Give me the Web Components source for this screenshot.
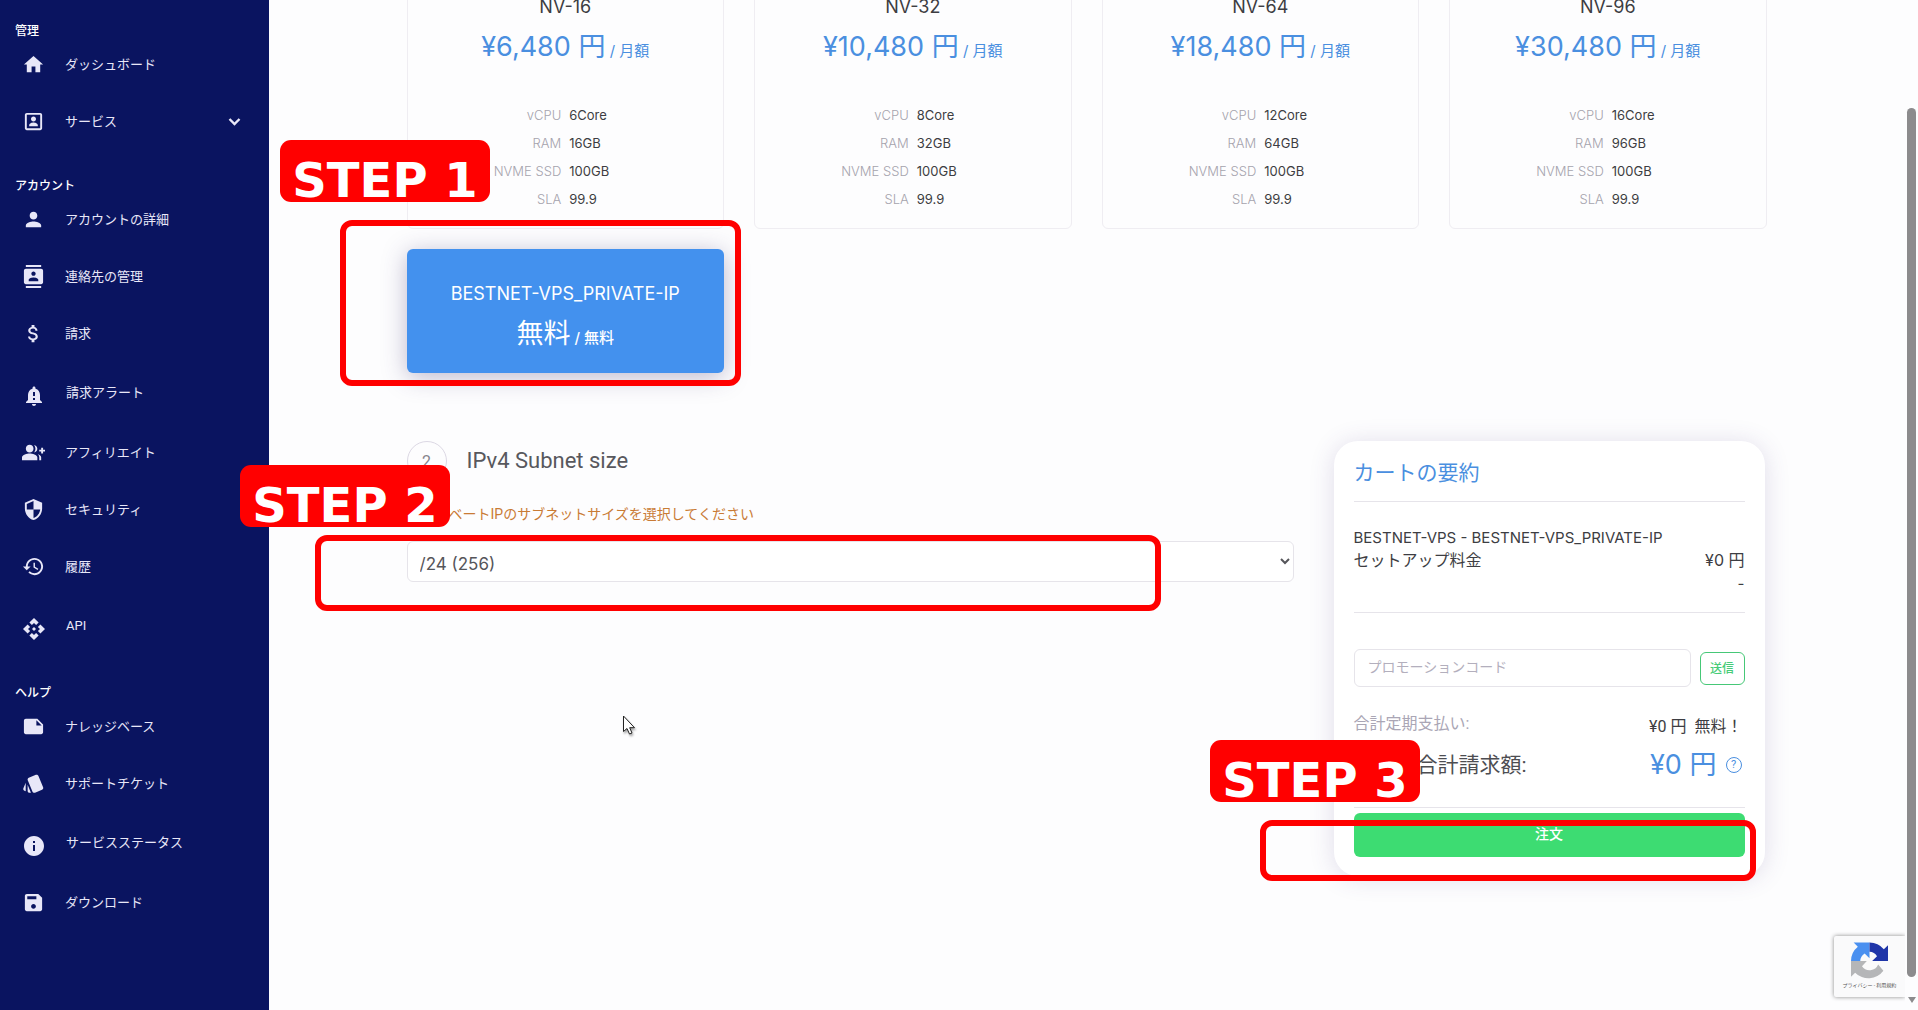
<!DOCTYPE html>
<html lang="ja">
<head>
<meta charset="utf-8">
<title>BESTNET VPS</title>
<style>
html, body { margin: 0; height: 100%; }
body {
  --ui: Roboto, "Noto Sans CJK JP", sans-serif;
  --geo: Inter, "Noto Sans CJK JP", sans-serif;
  --blue: #4a8fe0;
  --ink: #3d3d42;
  --line: #e6e4ea;
  font-family: var(--ui);
  color: var(--ink);
  background: #fdfdfe;
  overflow: hidden;
}
</style>
</head>
<body>
<order-page></order-page>

<script>
const ICONS = {
  home: 'M10 20v-6h4v6h5v-8h3L12 3 2 12h3v8z',
  service: 'M19 5v14H5V5h14m0-2H5c-1.11 0-2 .9-2 2v14c0 1.1.89 2 2 2h14c1.1 0 2-.9 2-2V5c0-1.1-.89-2-2-2zm-7 9c-1.5 0-2.6-1.1-2.6-2.6S10.500 6.800 12 6.800s2.600 1.100 2.600 2.600S13.500 12 12 12zm4.500 5h-9v-1.200c0-1.800 3-2.700 4.500-2.700s4.500.9 4.500 2.700V17z',
  person: 'M12 12c2.210 0 4-1.790 4-4s-1.790-4-4-4-4 1.790-4 4 1.790 4 4 4zm0 2c-2.670 0-8 1.340-8 4v2h16v-2c0-2.660-5.330-4-8-4z',
  contacts: 'M20 0H4v2h16V0zM4 24h16v-2H4v2zM20 4H4c-1.100 0-2 .9-2 2v12c0 1.100.9 2 2 2h16c1.100 0 2-.9 2-2V6c0-1.100-.9-2-2-2zm-8 2.750c1.240 0 2.250 1.010 2.250 2.250s-1.010 2.250-2.250 2.250S9.750 10.240 9.750 9 10.760 6.750 12 6.750zM17 17H7v-1.500c0-1.670 3.330-2.500 5-2.500s5 .83 5 2.500V17z',
  money: 'M11.800 10.900c-2.270-.59-3-1.200-3-2.150 0-1.090 1.010-1.850 2.700-1.850 1.780 0 2.440.85 2.500 2.100h2.210c-.07-1.720-1.120-3.300-3.210-3.810V3h-3v2.160c-1.940.42-3.500 1.680-3.500 3.610 0 2.310 1.910 3.460 4.700 4.130 2.500.6 3 1.480 3 2.410 0 .69-.49 1.790-2.700 1.790-2.060 0-2.870-.92-2.980-2.100h-2.200c.12 2.190 1.760 3.420 3.680 3.830V21h3v-2.150c1.950-.37 3.500-1.500 3.500-3.550 0-2.840-2.430-3.810-4.700-4.400z',
  alert: 'M18 16v-5c0-3.070-1.640-5.640-4.500-6.320V4c0-.83-.67-1.500-1.500-1.500s-1.500.67-1.500 1.500v.68C7.630 5.360 6 7.920 6 11v5l-2 2v1h16v-1l-2-2zm-5 0h-2v-2h2v2zm0-4h-2V8h2v4zm-1 10c1.100 0 2-.9 2-2h-4c0 1.100.89 2 2 2z',
  group: 'M22 9V7h-2v2h-2v2h2v2h2v-2h2V9zM8 12c2.210 0 4-1.790 4-4s-1.790-4-4-4-4 1.790-4 4 1.790 4 4 4zM8 13c-2.670 0-8 1.340-8 4v3h16v-3c0-2.660-5.330-4-8-4zM12.510 4.050C13.430 5.110 14 6.490 14 8s-.57 2.890-1.490 3.950C14.470 11.700 16 10.040 16 8s-1.530-3.700-3.490-3.950zM16.530 13.830C17.420 14.660 18 15.700 18 17v3h2v-3c0-1.450-1.590-2.510-3.470-3.170z',
  shield: 'M12 1L3 5v6c0 5.550 3.840 10.740 9 12 5.160-1.260 9-6.450 9-12V5l-9-4zm0 10.990h7c-.53 4.120-3.280 7.790-7 8.940V12H5V6.300l7-3.110v8.800z',
  history: 'M13 3c-4.970 0-9 4.030-9 9H1l3.890 3.890.07.14L9 12H6c0-3.870 3.130-7 7-7s7 3.130 7 7-3.130 7-7 7c-1.930 0-3.680-.79-4.940-2.060l-1.420 1.420C8.270 19.990 10.510 21 13 21c4.970 0 9-4.030 9-9s-4.030-9-9-9zm-1 5v5l4.280 2.540.72-1.210-3.500-2.080V8H12z',
  api: 'M14 12l-2 2-2-2 2-2 2 2zm-2-6l2.120 2.120 2.500-2.500L12 1 7.380 5.620l2.500 2.500L12 6zm-6 6l2.120-2.120-2.500-2.500L1 12l4.620 4.620 2.500-2.500L6 12zm12 0l-2.120 2.120 2.500 2.500L23 12l-4.620-4.620-2.500 2.500L18 12zm-6 6l-2.120-2.120-2.500 2.500L12 23l4.620-4.620-2.500-2.500L12 18z',
  note: 'M22 10l-6-6H4c-1.100 0-2 .9-2 2v12.010c0 1.100.9 1.990 2 1.990l16-.01c1.100 0 2-.89 2-1.990v-8zm-7-4.500l5.500 5.500H15V5.500z',
  style: 'M2.530 19.650l1.340.56v-9.030l-2.430 5.860c-.41 1.020.08 2.190 1.090 2.610zM22.030 15.950L17.070 3.980c-.31-.75-1.040-1.210-1.810-1.230-.26 0-.53.04-.79.15L7.100 5.950c-.75.31-1.210 1.030-1.230 1.800-.01.27.04.54.15.8l4.960 11.970c.31.76 1.050 1.220 1.830 1.230.26 0 .52-.05.77-.15l7.360-3.050c1.020-.42 1.510-1.590 1.090-2.600zM5.880 19.750c0 1.100.9 2 2 2h1.450l-3.450-8.340v6.340z',
  info: 'M12 2C6.480 2 2 6.480 2 12s4.480 10 10 10 10-4.480 10-10S17.520 2 12 2zm1 15h-2v-6h2v6zm0-8h-2V7h2v2z',
  save: 'M17 3H5c-1.110 0-2 .9-2 2v14c0 1.100.89 2 2 2h14c1.100 0 2-.9 2-2V7l-4-4zm-5 15.500c-1.500 0-2.500-1.100-2.500-2.500s1.100-2.500 2.500-2.500 2.500 1.100 2.500 2.500-1.100 2.500-2.500 2.500zm3-10H5.500V5.500H15v3z'
};

class View extends HTMLElement {
  connectedCallback() {
    if (this.shadowRoot) return;
    this.attachShadow({ mode: 'open' }).innerHTML = this.view();
  }
  at(name) { return this.getAttribute(name) || ''; }
}

customElements.define('nav-item', class extends View {
  view() {
    return `<style>
      :host { display: block; }
      a { display: flex; align-items: center; height: 57px; padding: 0 28px 0 22px; box-sizing: border-box;
          color: #e8e7f8; text-decoration: none; font-size: 13px; line-height: 20px; }
      .icon { width: 23px; height: 23px; fill: currentColor; margin-right: 20px; flex: none; }
      :host([tall]) a { height: 62px; }
      :host([tall]) .icon { width: 24px; height: 24px; margin-top: 5px; }
      span { flex: 1; }
      .chev { width: 13px; height: 8px; fill: none; stroke: currentColor; stroke-width: 2.4; }
    </style>
    <a href="#"><svg class="icon" viewBox="0 0 24 24" aria-hidden="true"><path fill-rule="evenodd" d="${ICONS[this.at('icon')]}"/></svg>
      <span><slot></slot></span>
      ${this.hasAttribute('more') ? '<svg class="chev" viewBox="0 0 13 8"><path d="M1.500 1l5 5 5-5"/></svg>' : ''}</a>`;
  }
});

customElements.define('nav-group', class extends View {
  view() {
    return `<style>
      :host { display: block; }
      h2 { margin: 0; padding: 31px 15px 0; line-height: 10px; font-size: 12px; font-weight: 500; color: #fff; }
      :host([first]) h2 { padding-top: 26px; }
    </style><h2>${this.at('label')}</h2><slot></slot>`;
  }
});

customElements.define('side-nav', class extends View {
  view() {
    return `<style>
      :host { display: block; width: 269px; flex: none; background: #0a1460; }
    </style>
    <nav>
      <nav-group first label="管理">
        <nav-item icon="home">ダッシュボード</nav-item>
        <nav-item icon="service" more>サービス</nav-item>
      </nav-group>
      <nav-group label="アカウント">
        <nav-item icon="person">アカウントの詳細</nav-item>
        <nav-item icon="contacts">連絡先の管理</nav-item>
        <nav-item icon="money">請求</nav-item>
        <nav-item icon="alert" tall>請求アラート</nav-item>
        <nav-item icon="group">アフィリエイト</nav-item>
        <nav-item icon="shield">セキュリティ</nav-item>
        <nav-item icon="history">履歴</nav-item>
        <nav-item icon="api" tall>API</nav-item>
      </nav-group>
      <nav-group label="ヘルプ">
        <nav-item icon="note">ナレッジベース</nav-item>
        <nav-item icon="style">サポートチケット</nav-item>
        <nav-item icon="info" tall>サービスステータス</nav-item>
        <nav-item icon="save">ダウンロード</nav-item>
      </nav-group>
    </nav>`;
  }
});

customElements.define('plan-card', class extends View {
  view() {
    const rows = [['vCPU', this.at('cpu')], ['RAM', this.at('ram')], ['NVME SSD', '100GB'], ['SLA', '99.9']];
    return `<style>
      :host { display: block; box-sizing: border-box; border: 1px solid #efedf2; border-radius: 6px;
              padding: 26px 16px 15px; text-align: center; font-family: var(--geo); }
      h3 { margin: 0 0 10px; font-size: 18px; line-height: 20px; font-weight: 400; }
      p { margin: 0; height: 40px; font-size: 27px; line-height: 40px; color: var(--blue); font-weight: 400; white-space: nowrap; }
      small { font-size: 15px; }
      dl { margin: 34px 0 0; display: grid; grid-template-columns: 1fr 1fr; column-gap: 8px; font-size: 13px; line-height: 28px; }
      dt { text-align: right; color: #a5a3ad; font-weight: 300; }
      dd { margin: 0; text-align: left; }
      :host([selected]) { border: 0; background: #4391ee; color: #fff; padding: 33px 16px 19px;
              box-shadow: 0 4px 24px rgba(60, 50, 110, .34); }
      :host([selected]) h3 { line-height: 24px; margin-bottom: 8px; }
      :host([selected]) p { color: #fff; }
      :host([selected]) small { font-weight: 500; }
    </style>
    <h3>${this.at('name')}</h3>
    <p>${this.at('price')}<small> / ${this.at('term')}</small></p>
    ${this.hasAttribute('selected') ? '' : `<dl>${rows.map(r => `<dt>${r[0]}</dt><dd>${r[1]}</dd>`).join('')}</dl>`}`;
  }
});

customElements.define('subnet-field', class extends View {
  view() {
    return `<style>
      :host { display: block; }
      header { display: flex; align-items: center; gap: 20px; }
      .num { width: 40px; height: 40px; box-sizing: border-box; border: 1px solid #dcd8e4; border-radius: 50%;
             display: grid; place-items: center; font-size: 16px; color: #85838c; }
      h2 { margin: 0; font-size: 22px; line-height: 40px; font-weight: 400; color: #58585d; }
      label { display: block; margin: 23px 0 17px; font-size: 14px; line-height: 20px; color: #c97b35; }
      select { display: block; width: 100%; height: 41px; box-sizing: border-box; padding: 4px 0 0 8px; border: 1px solid var(--line);
               border-radius: 6px; background: #fff; color: #55555a; font: 17px var(--geo); }
    </style>
    <header><span class="num">2</span><h2>IPv4 Subnet size</h2></header>
    <label for="size">プライベートIPのサブネットサイズを選択してください</label>
    <select id="size"><option>/24 (256)</option></select>`;
  }
});

customElements.define('cart-summary', class extends View {
  view() {
    return `<style>
      :host { display: block; box-sizing: border-box; padding: 17px 20px 19px; background: #fff; border-radius: 24px;
              box-shadow: 0 2px 24px rgba(80, 60, 130, .17); font-size: 16px; }
      h2 { margin: 0; font-size: 21px; line-height: 30px; font-weight: 400; color: var(--blue); }
      hr { border: 0; border-top: 1px solid var(--line); margin: 13px 0 0; }
      .lines + hr { margin-top: 17px; }
      .total + hr { margin-top: 22px; }
      .lines { padding-top: 24px; line-height: 23px; font-family: var(--geo); font-size: 15px; }
      .lines .jp { font-size: 16px; }
      .row { display: flex; justify-content: space-between; }
      .end { text-align: right; }
      form { display: flex; align-items: center; gap: 9px; margin-top: 36px; }
      input { flex: 1; min-width: 0; height: 38px; box-sizing: border-box; border: 1px solid var(--line); border-radius: 6px;
              padding: 0 13px 2px; font: 14px var(--ui); background: #fff; }
      input::placeholder { color: #b3afbd; }
      form button { width: 45px; height: 33px; padding: 0 0 1px; border: 1px solid #46c877; border-radius: 6px; background: #fff;
              color: #46cc77; font: 500 12px var(--ui); }
      .recurring { height: 27px; line-height: 24px; margin-top: 25px; }
      .recurring .label { color: #aaa6b5; }
      .recurring .value { align-self: flex-end; padding-right: 2px; }
      .recurring b { font-weight: 400; margin-left: 8px; }
      .total { align-items: center; margin-top: 6px; line-height: 40px; }
      .total .label { font-size: 21px; color: #4d4d52; }
      .total .value { display: flex; align-items: center; gap: 9px; font: 27px/40px var(--geo); color: var(--blue); padding-right: 3px; }
      .q { width: 16px; height: 16px; box-sizing: border-box; border: 1px solid currentColor; border-radius: 50%; font: 11px/14px var(--ui); text-align: center; }
      .order { display: block; width: 100%; height: 44px; margin-top: 5px; padding: 0 0 4px; border: 0; border-radius: 6px;
               background: #3ddc72; color: #fff; font: 500 14px var(--ui); }
    </style>
    <h2>カートの要約</h2>
    <hr>
    <div class="lines">
      <div>BESTNET-VPS - BESTNET-VPS_PRIVATE-IP</div>
      <div class="row jp"><span>セットアップ料金</span><span>¥0 円</span></div>
      <div class="end">-</div>
    </div>
    <hr>
    <form><input aria-label="プロモーションコード" placeholder="プロモーションコード"><button type="button">送信</button></form>
    <div class="row recurring"><span class="label">合計定期支払い:</span><span class="value">¥0 円<b>無料！</b></span></div>
    <div class="row total"><span class="label">本日の合計請求額:</span><span class="value">¥0 円<span class="q">?</span></span></div>
    <hr>
    <button class="order" type="button">注文</button>`;
  }
});

customElements.define('step-tag', class extends View {
  view() {
    return `<style>
      :host { position: absolute; box-sizing: border-box; width: 210px; height: 62px; padding-top: 18px; border-radius: 11px;
              background: #f00; color: #fff; text-align: center; font: bold 48px/44px "DejaVu Sans", sans-serif; white-space: nowrap; z-index: 3; }
    </style><slot></slot>`;
  }
});

customElements.define('mark-frame', class extends View {
  view() {
    return `<style>
      :host { position: absolute; box-sizing: border-box; border: 6px solid #f00; border-radius: 12px; pointer-events: none; z-index: 2; }
    </style>`;
  }
});

customElements.define('captcha-badge', class extends View {
  view() {
    return `<style>
      :host { position: absolute; right: 13px; bottom: 13px; width: 71px; height: 61px; box-sizing: border-box; padding-top: 6px; background: #fafafb;
              box-shadow: 0 0 4px #888; border-radius: 2px 0 0 2px; text-align: center; clip-path: inset(-6px 0 -6px -6px); }
      svg { display: block; width: 37px; height: 38px; margin: 0 auto 1px 17px; }
      p { margin: 0; font-size: 5px; line-height: 8px; color: #555; white-space: nowrap; }
    </style>
    <svg viewBox="0 0 64 64" aria-hidden="true">
      <path fill="#b5b6b8" d="M0 32V59.400l7.200-7.200A32 32 0 0 0 56 49L47 38A16 16 0 0 1 19 41L27.400 32z"/>
      <path fill="#4a90f0" transform="rotate(-90 32 32)" d="M32 0A32 32 0 0 1 56.800 11.800L64 4.600V32H36.600L45 23.600A16 16 0 0 0 32 16z"/>
      <path fill="#1f35a8" d="M32 0A32 32 0 0 1 56.800 11.800L64 4.600V32H36.600L45 23.600A16 16 0 0 0 32 16z"/>
    </svg>
    <p>プライバシー - 利用規約</p>`;
  }
});

customElements.define('scroll-rail', class extends View {
  view() {
    return `<style>
      :host { display: flex; flex-direction: column; align-items: center; width: 14px; flex: none; box-sizing: border-box; padding: 108px 2px 7px 3px; }
      i { flex: 1; width: 9px; border-radius: 5px; background: #8c8b8d; }
      svg { width: 8px; height: 6px; margin-top: 20px; fill: #8c8b8d; }
    </style><i></i><svg viewBox="0 0 8 6"><path d="M0 0h8L4 6z"/></svg>`;
  }
});

customElements.define('order-page', class extends View {
  view() {
    return `<style>
      :host { display: flex; position: relative; height: 100vh; min-height: 960px; overflow: hidden; }
      main { flex: 1; min-width: 0; }
      .wrap { max-width: 1360px; margin: 0 auto; }
      .plans { display: grid; grid-template-columns: repeat(4, 1fr); gap: 20px 30px; margin-top: -30px; }
      .setup { display: grid; grid-template-columns: 1fr 431px; align-items: start; gap: 40px; margin-top: 68px; padding-right: 2px; }
      .pointer { position: absolute; left: 622px; top: 715px; width: 16px; height: 22px; filter: drop-shadow(1px 2px 1px rgba(0,0,0,.35)); }
    </style>
    <side-nav></side-nav>
    <main><div class="wrap">
      <section class="plans">
        <plan-card name="NV-16" price="¥6,480 円" term="月額" cpu="6Core" ram="16GB"></plan-card>
        <plan-card name="NV-32" price="¥10,480 円" term="月額" cpu="8Core" ram="32GB"></plan-card>
        <plan-card name="NV-64" price="¥18,480 円" term="月額" cpu="12Core" ram="64GB"></plan-card>
        <plan-card name="NV-96" price="¥30,480 円" term="月額" cpu="16Core" ram="96GB"></plan-card>
        <plan-card selected name="BESTNET-VPS_PRIVATE-IP" price="無料" term="無料"></plan-card>
      </section>
      <section class="setup"><subnet-field></subnet-field><cart-summary></cart-summary></section>
    </div></main>
    <scroll-rail></scroll-rail>
    <captcha-badge></captcha-badge>
    <mark-frame style="left:340px;top:220px;width:401px;height:166px"></mark-frame>
    <mark-frame style="left:315px;top:535px;width:846px;height:76px"></mark-frame>
    <mark-frame style="left:1260px;top:820px;width:496px;height:61px"></mark-frame>
    <step-tag style="left:280px;top:140px">STEP 1</step-tag>
    <step-tag style="left:240px;top:465px">STEP 2</step-tag>
    <step-tag style="left:1210px;top:740px">STEP 3</step-tag>
    <svg class="pointer" viewBox="0 0 16 22" aria-hidden="true"><path fill="#fff" stroke="#222" stroke-width="1" d="M1.500 1v15.500l3.500-3 2.500 5.500 2.500-1-2.300-5.300h4.800z"/></svg>`;
  }
});
</script>
</body>
</html>
